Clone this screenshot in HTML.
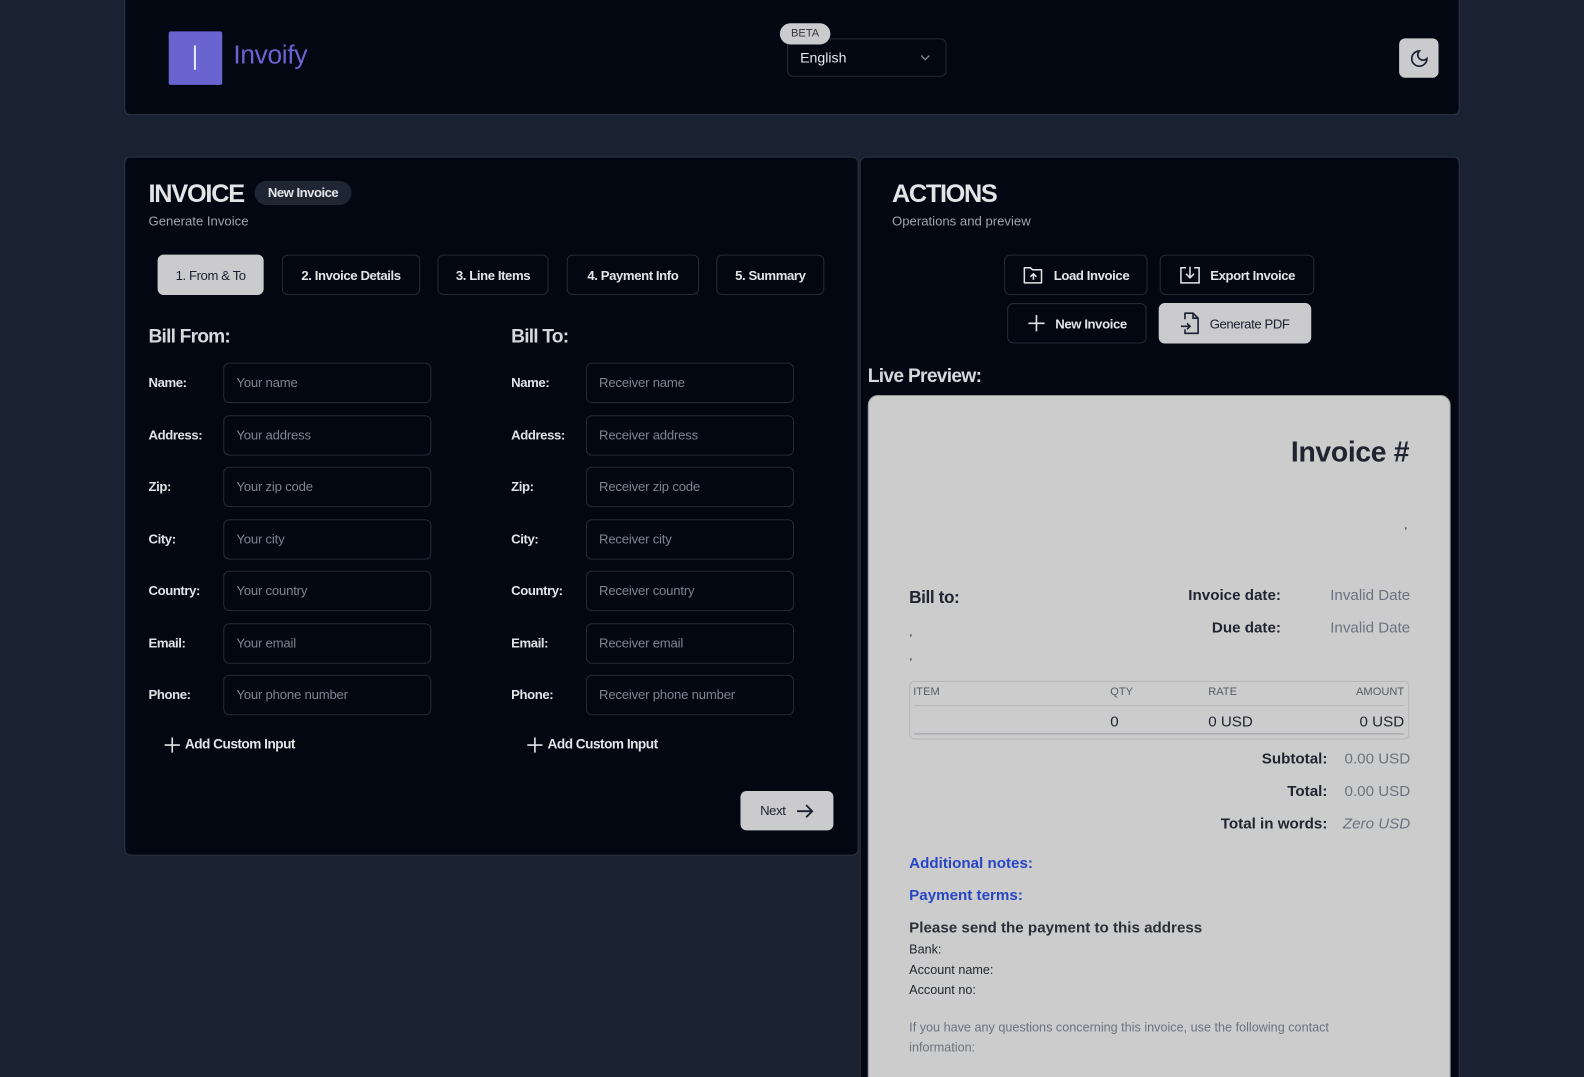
<!DOCTYPE html>
<html><head><meta charset="utf-8"><style>
*{box-sizing:border-box;margin:0;padding:0}
html,body{width:1584px;height:1077px;overflow:hidden}
body{background:#1a2130;font-family:"Liberation Sans",sans-serif;position:relative;color:#e4e4e7}
#clip{position:absolute;left:0;top:0;width:1584px;height:1077px;overflow:hidden}
#w{position:absolute;left:0;top:0;width:1568px;height:1066px;transform:scale(1.0102);transform-origin:0 0}
.a{position:absolute}
.card{position:absolute;background:#020712;border:1px solid #2c3444;border-radius:6px}
.lbl{position:absolute;font-size:13px;font-weight:bold;color:#e2e2e6;letter-spacing:-0.4px}
.inp{position:absolute;width:206px;height:40px;border:1px solid #232b3a;border-radius:6px;font-size:13px;color:#7d8391;padding:11px 0 0 12px;letter-spacing:-0.2px}
.btn{position:absolute;height:40px;border:1px solid #232b3a;border-radius:6px;font-size:13px;font-weight:bold;color:#e4e4e7;display:flex;align-items:center;justify-content:center;letter-spacing:-0.4px}
.lt{background:#cbcbcd;color:#1b2030;border-color:#cbcbcd}
.pv{color:#1f2430}
svg{display:block}
</style></head><body><div id="clip"><div id="w">
<!-- header -->
<div class="card" style="left:123px;top:-6px;width:1322px;height:120px"></div>
<div class="a" style="left:167px;top:31px;width:53px;height:53px;background:#6a64d1;border-radius:2px"></div>
<div class="a" style="left:192px;top:45px;width:2px;height:24px;background:#e8e8ff"></div>
<div class="a" style="left:231px;top:39px;font-size:26px;color:#6a64d1;letter-spacing:-0.3px">Invoify</div>
<div class="a" style="left:779px;top:38px;width:158px;height:38px;border:1px solid #232b3a;border-radius:6px"></div>
<div class="a" style="left:792px;top:49px;font-size:14px;color:#e8e8ec">English</div>
<svg class="a" style="left:910px;top:52px" width="12" height="10"><path d="M2 3l4 4 4-4" stroke="#8a8f99" fill="none" stroke-width="1.2"/></svg>
<div class="a" style="left:772px;top:23px;width:50px;height:21px;background:#cbcbcd;border-radius:11px;font-size:11px;color:#333;text-align:center;line-height:21px">BETA</div>
<div class="a" style="left:1385px;top:38px;width:39px;height:39px;background:#cbcbcd;border-radius:6px"></div>
<svg class="a" style="left:1395px;top:48px" width="20" height="20" viewBox="0 0 24 24"><path d="M12 3a6 6 0 0 0 9 9 9 9 0 1 1-9-9Z" stroke="#1b2030" fill="none" stroke-width="2"/></svg>

<!-- left card -->
<div class="card" style="left:123px;top:155px;width:727px;height:692px"></div>
<div class="a" style="left:147px;top:178px;font-size:25px;font-weight:bold;color:#e4e4e7;letter-spacing:-1.2px">INVOICE</div>
<div class="a" style="left:252px;top:179px;width:96px;height:24px;background:#1e2533;border-radius:12px;font-size:13px;font-weight:bold;text-align:center;line-height:24px;letter-spacing:-0.5px">New Invoice</div>
<div class="a" style="left:147px;top:211px;font-size:13px;color:#a0a4ad">Generate Invoice</div>
<div class="btn lt" style="left:156px;top:252px;width:105px;font-weight:normal">1. From &amp; To</div>
<div class="btn" style="left:279px;top:252px;width:137px">2. Invoice Details</div>
<div class="btn" style="left:433px;top:252px;width:110px">3. Line Items</div>
<div class="btn" style="left:561px;top:252px;width:131px">4. Payment Info</div>
<div class="btn" style="left:709px;top:252px;width:107px">5. Summary</div>
<div class="a" style="left:147px;top:323px;font-size:19px;font-weight:bold;color:#d8d8dc;letter-spacing:-0.8px">Bill From:</div>
<div class="a" style="left:506px;top:323px;font-size:19px;font-weight:bold;color:#d8d8dc;letter-spacing:-0.8px">Bill To:</div>

<div class="lbl" style="left:147px;top:371px">Name:</div><div class="inp" style="left:221px;top:359px">Your name</div>
<div class="lbl" style="left:147px;top:423px">Address:</div><div class="inp" style="left:221px;top:411px">Your address</div>
<div class="lbl" style="left:147px;top:474px">Zip:</div><div class="inp" style="left:221px;top:462px">Your zip code</div>
<div class="lbl" style="left:147px;top:526px">City:</div><div class="inp" style="left:221px;top:514px">Your city</div>
<div class="lbl" style="left:147px;top:577px">Country:</div><div class="inp" style="left:221px;top:565px">Your country</div>
<div class="lbl" style="left:147px;top:629px">Email:</div><div class="inp" style="left:221px;top:617px">Your email</div>
<div class="lbl" style="left:147px;top:680px">Phone:</div><div class="inp" style="left:221px;top:668px">Your phone number</div>

<div class="lbl" style="left:506px;top:371px">Name:</div><div class="inp" style="left:580px;top:359px">Receiver name</div>
<div class="lbl" style="left:506px;top:423px">Address:</div><div class="inp" style="left:580px;top:411px">Receiver address</div>
<div class="lbl" style="left:506px;top:474px">Zip:</div><div class="inp" style="left:580px;top:462px">Receiver zip code</div>
<div class="lbl" style="left:506px;top:526px">City:</div><div class="inp" style="left:580px;top:514px">Receiver city</div>
<div class="lbl" style="left:506px;top:577px">Country:</div><div class="inp" style="left:580px;top:565px">Receiver country</div>
<div class="lbl" style="left:506px;top:629px">Email:</div><div class="inp" style="left:580px;top:617px">Receiver email</div>
<div class="lbl" style="left:506px;top:680px">Phone:</div><div class="inp" style="left:580px;top:668px">Receiver phone number</div>

<svg class="a" style="left:162px;top:729px" width="17" height="17"><path d="M8.5 1v15M1 8.5h15" stroke="#e4e4e7" stroke-width="1.6"/></svg>
<div class="a" style="left:183px;top:729px;font-size:13.5px;font-weight:bold;letter-spacing:-0.5px">Add Custom Input</div>
<svg class="a" style="left:521px;top:729px" width="17" height="17"><path d="M8.5 1v15M1 8.5h15" stroke="#e4e4e7" stroke-width="1.6"/></svg>
<div class="a" style="left:542px;top:729px;font-size:13.5px;font-weight:bold;letter-spacing:-0.5px">Add Custom Input</div>
<div class="btn lt" style="left:733px;top:783px;width:92px;height:39px;font-weight:normal;gap:10px">Next <svg width="18" height="16"><path d="M1 8h15M10 2l6 6-6 6" stroke="#1b2030" fill="none" stroke-width="1.8"/></svg></div>

<!-- right card -->
<div class="card" style="left:851px;top:155px;width:594px;height:930px"></div>
<div class="a" style="left:883px;top:178px;font-size:25px;font-weight:bold;color:#e4e4e7;letter-spacing:-1.3px">ACTIONS</div>
<div class="a" style="left:883px;top:211px;font-size:13px;color:#a0a4ad">Operations and preview</div>
<div class="btn" style="left:994px;top:252px;width:142px;gap:9px"><svg width="22" height="20" viewBox="0 0 22 20"><path d="M2 3h6l2 2h9v13H2z" stroke="#e4e4e7" fill="none" stroke-width="1.5" stroke-linejoin="round"/><path d="M11 15V9M8 12l3-3 3 3" stroke="#e4e4e7" fill="none" stroke-width="1.5"/></svg>Load Invoice</div>
<div class="btn" style="left:1148px;top:252px;width:153px;gap:9px"><svg width="22" height="20" viewBox="0 0 22 20"><path d="M7 3H2v15h18V3h-5" stroke="#e4e4e7" fill="none" stroke-width="1.5"/><path d="M11 2v11M7 9l4 4 4-4" stroke="#e4e4e7" fill="none" stroke-width="1.5"/></svg>Export Invoice</div>
<div class="btn" style="left:997px;top:300px;width:138px;gap:10px"><svg width="18" height="18"><path d="M9 1v16M1 9h16" stroke="#e4e4e7" stroke-width="1.6"/></svg>New Invoice</div>
<div class="btn lt" style="left:1147px;top:300px;width:151px;font-weight:normal;gap:9px"><svg width="20" height="24" viewBox="0 0 20 24"><path d="M5 8V2h8l5 5v15H5v-4" stroke="#1b2030" fill="none" stroke-width="1.6" stroke-linejoin="round"/><path d="M13 2v5h5" stroke="#1b2030" fill="none" stroke-width="1.6"/><path d="M1 15h9M7 12l3 3-3 3" stroke="#1b2030" fill="none" stroke-width="1.6"/></svg>Generate PDF</div>
<div class="a" style="left:859px;top:362px;font-size:19px;font-weight:bold;color:#d8d8dc;letter-spacing:-0.7px">Live Preview:</div>

<!-- preview -->
<div class="a" style="left:859px;top:391px;width:577px;height:700px;background:#cccccc;border:1px solid #999;border-radius:10px"></div>
<div class="a pv" style="left:1200px;top:432px;width:195px;text-align:right;font-size:28px;font-weight:bold;letter-spacing:-0.3px">Invoice #</div>
<div class="a pv" style="left:1390px;top:512px;font-size:12px">,</div>
<div class="a pv" style="left:900px;top:582px;font-size:17px;font-weight:bold;letter-spacing:-0.4px">Bill to:</div>
<div class="a pv" style="left:900px;top:618px;font-size:12px">,</div>
<div class="a pv" style="left:900px;top:642px;font-size:12px">,</div>
<div class="a pv" style="left:1100px;top:581px;width:168px;text-align:right;font-size:15px;font-weight:bold">Invoice date:</div>
<div class="a" style="left:1280px;top:581px;width:116px;text-align:right;font-size:15px;color:#6b7280">Invalid Date</div>
<div class="a pv" style="left:1100px;top:613px;width:168px;text-align:right;font-size:15px;font-weight:bold">Due date:</div>
<div class="a" style="left:1280px;top:613px;width:116px;text-align:right;font-size:15px;color:#6b7280">Invalid Date</div>
<div class="a" style="left:900px;top:674px;width:495px;height:58px;border:1px solid #b5b5b8;border-radius:5px"></div>
<div class="a" style="left:905px;top:698px;width:485px;height:1px;background:#b5b5b8"></div>
<div class="a" style="left:905px;top:726px;width:485px;height:1px;background:#9a9aa5"></div>
<div class="a" style="left:904px;top:679px;font-size:11px;color:#555b66">ITEM</div>
<div class="a" style="left:1099px;top:679px;font-size:11px;color:#555b66">QTY</div>
<div class="a" style="left:1196px;top:679px;font-size:11px;color:#555b66">RATE</div>
<div class="a" style="left:1300px;top:679px;width:90px;text-align:right;font-size:11px;color:#555b66">AMOUNT</div>
<div class="a pv" style="left:1099px;top:706px;font-size:15px">0</div>
<div class="a pv" style="left:1196px;top:706px;font-size:15px">0 USD</div>
<div class="a pv" style="left:1300px;top:706px;width:90px;text-align:right;font-size:15px">0 USD</div>
<div class="a pv" style="left:1150px;top:743px;width:164px;text-align:right;font-size:15px;font-weight:bold">Subtotal:</div>
<div class="a" style="left:1320px;top:743px;width:76px;text-align:right;font-size:15px;color:#6b7280">0.00 USD</div>
<div class="a pv" style="left:1150px;top:775px;width:164px;text-align:right;font-size:15px;font-weight:bold">Total:</div>
<div class="a" style="left:1320px;top:775px;width:76px;text-align:right;font-size:15px;color:#6b7280">0.00 USD</div>
<div class="a pv" style="left:1150px;top:807px;width:164px;text-align:right;font-size:15px;font-weight:bold">Total in words:</div>
<div class="a" style="left:1320px;top:807px;width:76px;text-align:right;font-size:15px;color:#6b7280;font-style:italic">Zero USD</div>
<div class="a" style="left:900px;top:846px;font-size:15px;font-weight:bold;color:#2746c4">Additional notes:</div>
<div class="a" style="left:900px;top:878px;font-size:15px;font-weight:bold;color:#2746c4">Payment terms:</div>
<div class="a pv" style="left:900px;top:910px;font-size:15px;font-weight:bold;color:#2a2f3a">Please send the payment to this address</div>
<div class="a pv" style="left:900px;top:933px;font-size:12.5px">Bank:</div>
<div class="a pv" style="left:900px;top:953px;font-size:12.5px">Account name:</div>
<div class="a pv" style="left:900px;top:973px;font-size:12.5px">Account no:</div>
<div class="a" style="left:900px;top:1007px;width:480px;font-size:12.5px;color:#6b7280;line-height:20px">If you have any questions concerning this invoice, use the following contact information:</div>
</div></div></body></html>
